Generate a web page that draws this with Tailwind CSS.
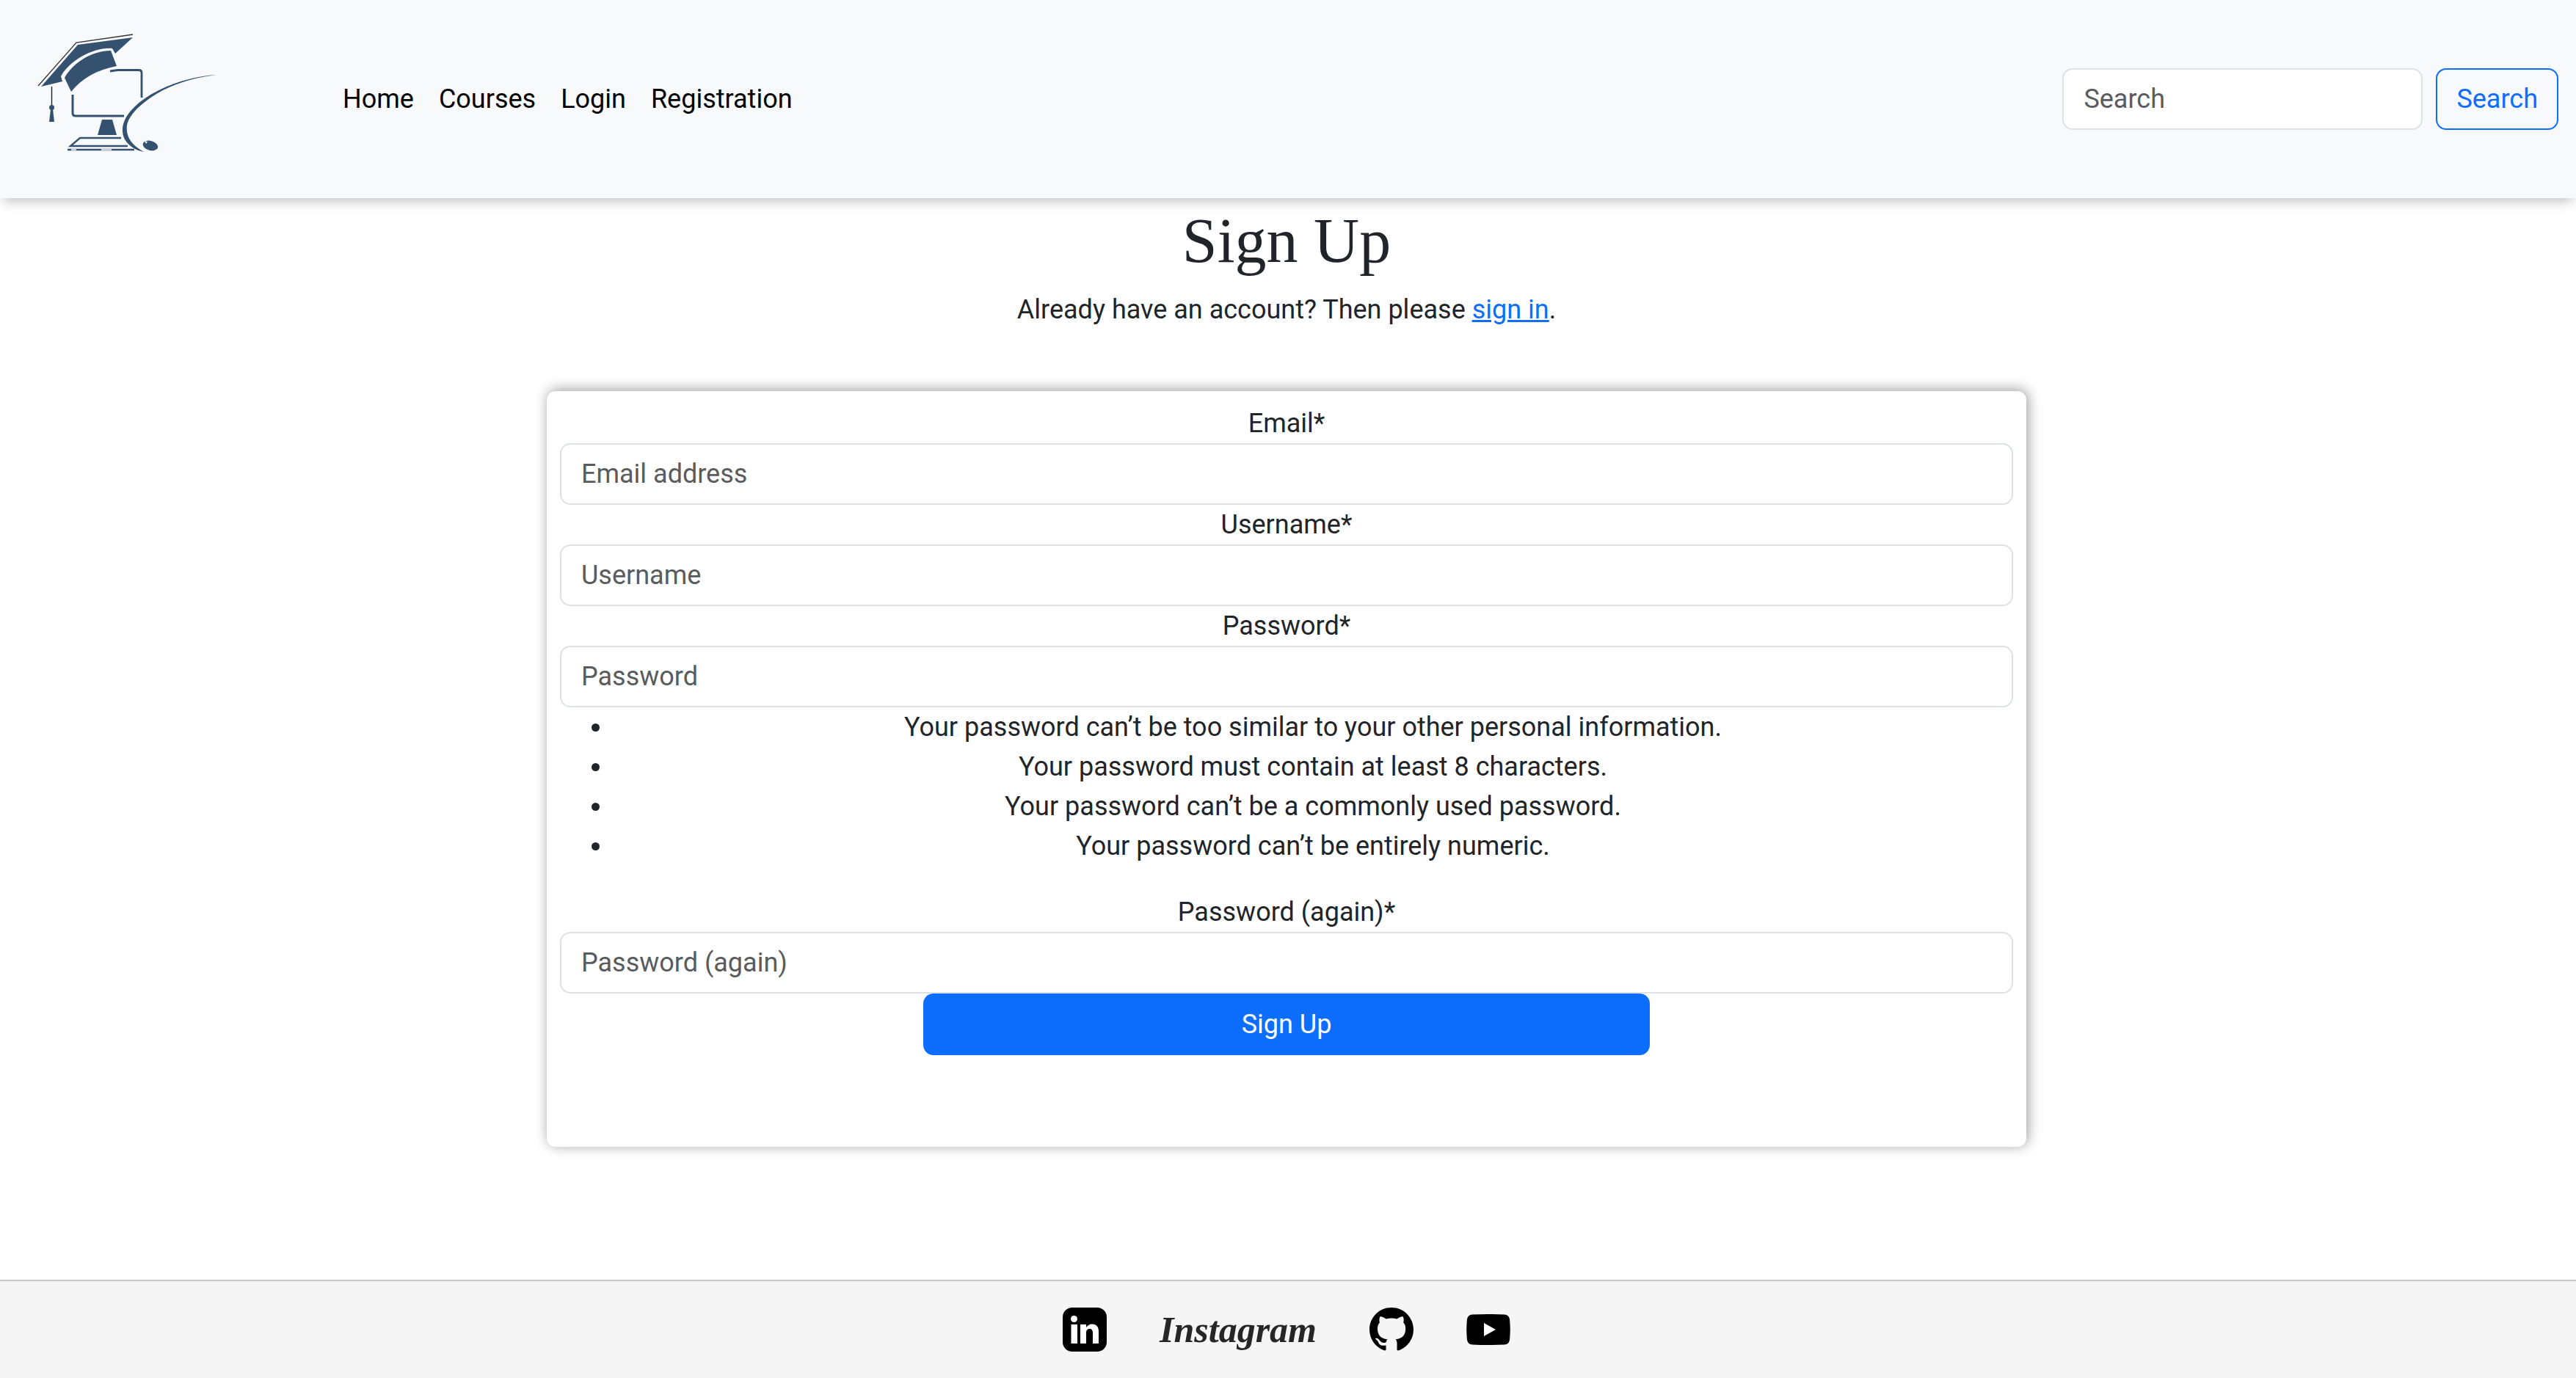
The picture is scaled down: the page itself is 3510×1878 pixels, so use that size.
<!DOCTYPE html>
<html lang="en">
<head>
<meta charset="utf-8">
<meta name="viewport" content="width=device-width, initial-scale=1">
<title>Sign Up</title>
<script src="https://cdn.jsdelivr.net/npm/@tailwindcss/browser@4"></script>
</head>
<body class="flex min-h-screen flex-col bg-white font-['Roboto',sans-serif] text-[36px] leading-[54px] text-[#212529]">
<header class="flex items-center bg-[#f8f9fb] px-6 py-[18px] shadow-[0_9px_16px_-5px_rgba(0,0,0,0.26)]">
  <a href="#" aria-label="Home page" class="mr-[163px] block">
    <svg class="h-[234px] w-[280px]" viewBox="24 18 280 234" fill="#34526f">
      <path d="M52 117 104 58 181 47" fill="none" stroke="#333" stroke-width="1.3"/>
      <path d="M56 118 106 61 181 51 157 73 153 66C128 64 95 82 83 104L85 111Z"/>
      <path d="M88 106C99 86 125 69 151 69L159 90C133 95 112 106 97 125Z"/>
      <path d="M150 97 160 95.500H189Q193 95.500 193 99.500V133" fill="none" stroke="#34526f" stroke-width="2.8"/>
      <path d="M99 129V154Q99 158 103 158H169" fill="none" stroke="#34526f" stroke-width="3"/>
      <path d="M70.500 118V144" fill="none" stroke="#222" stroke-width="1.4"/>
      <circle cx="70.500" cy="146.500" r="3.500"/>
      <path d="M69 149H72L74 166H67Z"/>
      <path d="M139 163H153L159 184H133Z"/>
      <path d="M165 188H109L96 199H174" fill="none" stroke="#34526f" stroke-width="2.4"/>
      <path d="M92 204H183" fill="none" stroke="#34526f" stroke-width="2.6"/>
      <path d="M97 204H104M138 204H152" stroke="#f8f9fb" stroke-width="1.6"/>
      <path d="M295 102C256 104 209 121 184 145C168 160 163 176 170 190C176 200 186 205 196 207C180 198 171 187 173 171C176 154 198 136 222 123C246 111 270 105 295 102Z"/>
      <ellipse cx="205" cy="198.500" rx="10.500" ry="6.500" transform="rotate(15 205 198)"/>
      <path d="M197 192 201 193 199 196Z" fill="#f8f9fb"/>
    </svg>
  </a>
  <nav class="flex gap-[34px] text-black">
    <a href="#">Home</a>
    <a href="#">Courses</a>
    <a href="#">Login</a>
    <a href="#">Registration</a>
  </nav>
  <form class="ml-auto flex gap-[18px]">
    <input type="search" placeholder="Search" aria-label="Search" class="h-[84px] w-[491px] rounded-[14px] border-2 border-[#dee2e6] bg-white px-[27px] placeholder:text-[#595c5f]">
    <button type="button" class="h-[84px] rounded-[14px] border-2 border-[#0d6efd] px-[26px] text-[#0d6efd]">Search</button>
  </form>
</header>
<main class="mr-1 flex flex-1 flex-col items-center px-6 pt-1 pb-[180px] text-center">
  <h1 class="mb-[13px] font-['Liberation_Serif',serif] text-[86px] leading-[108px] font-normal">Sign Up</h1>
  <p>Already have an account? Then please <a href="#" class="text-[#0d6efd] underline">sign in</a>.</p>
  <form class="mt-[84px] flex w-full max-w-[2016px] flex-col rounded-[12px] bg-white px-[18px] pt-[17px] pb-[125px] shadow-[2px_-2px_18px_rgba(0,0,0,0.4)]">
    <label for="email">Email*</label>
    <input id="email" type="email" placeholder="Email address" class="h-[84px] rounded-[14px] border-2 border-[#dee2e6] px-[27px] placeholder:text-[#595c5f]">
    <label for="username">Username*</label>
    <input id="username" type="text" placeholder="Username" class="h-[84px] rounded-[14px] border-2 border-[#dee2e6] px-[27px] placeholder:text-[#595c5f]">
    <label for="password">Password*</label>
    <input id="password" type="password" placeholder="Password" class="h-[84px] rounded-[14px] border-2 border-[#dee2e6] px-[27px] placeholder:text-[#595c5f]">
    <ul class="mb-9 list-disc pl-[72px]">
      <li>Your password can’t be too similar to your other personal information.</li>
      <li>Your password must contain at least 8 characters.</li>
      <li>Your password can’t be a commonly used password.</li>
      <li>Your password can’t be entirely numeric.</li>
    </ul>
    <label for="password2">Password (again)*</label>
    <input id="password2" type="password" placeholder="Password (again)" class="h-[84px] rounded-[14px] border-2 border-[#dee2e6] px-[27px] placeholder:text-[#595c5f]">
    <button type="button" class="h-[84px] w-1/2 self-center rounded-[14px] bg-[#0d6efd] text-white">Sign Up</button>
  </form>
</main>
<footer class="flex items-center justify-center gap-[72px] border-t-2 border-[#c8c8c8] bg-[#f5f5f5] py-9 pr-1">
  <a href="#" aria-label="LinkedIn"><svg class="size-[60px]" viewBox="0 0 60 60"><rect width="60" height="60" rx="13"/><g fill="#fff"><circle cx="15.500" cy="15.500" r="4.500"/><path d="M11.500 23H20V49H11.500ZM24 23H32V27C34 24 37 22.500 40 22.500C46 22.500 49 26 49 33V49H41V34C41 31 39.500 29 37 29C34 29 32 31 32 34V49H24Z"/></g></svg></a>
  <a href="#" class="font-['Liberation_Serif',serif] text-[50px] leading-[60px] font-bold text-[#262626] italic">Instagram</a>
  <a href="#" aria-label="GitHub"><svg class="size-[60px]" viewBox="0 0 16 16"><path d="M8 0C3.580 0 0 3.580 0 8c0 3.540 2.290 6.530 5.470 7.590.4.070.55-.17.55-.38 0-.19-.01-.82-.01-1.490-2.010.37-2.530-.49-2.690-.94-.09-.23-.48-.94-.82-1.130-.28-.15-.68-.52-.01-.53.63-.01 1.080.58 1.230.82.720 1.210 1.870.87 2.330.66.070-.52.280-.87.510-1.070-1.780-.2-3.640-.89-3.640-3.950 0-.87.310-1.590.82-2.150-.08-.2-.36-1.020.08-2.120 0 0 .67-.21 2.200.82.640-.18 1.320-.27 2-.27s1.360.09 2 .27c1.530-1.040 2.200-.82 2.200-.82.440 1.100.160 1.920.080 2.120.510.560.820 1.270.820 2.150 0 3.070-1.870 3.750-3.650 3.950.290.250.540.730.540 1.480 0 1.070-.01 1.930-.01 2.200 0 .210.150.460.550.380A8.010 8.010 0 0 0 16 8c0-4.420-3.580-8-8-8Z"/></svg></a>
  <a href="#" aria-label="YouTube"><svg class="size-[60px]" viewBox="0 0 60 60"><path d="M8 9.500Q30 8.500 52 9.500Q58 10 59 16Q60.500 30 59 44Q58 50 52 50.500Q30 51.500 8 50.500Q2 50 1 44Q-.5 30 1 16Q2 10 8 9.500Z"/><path d="M24 21 40 30 24 39Z" fill="#fff"/></svg></a>
</footer>
</body>
</html>
